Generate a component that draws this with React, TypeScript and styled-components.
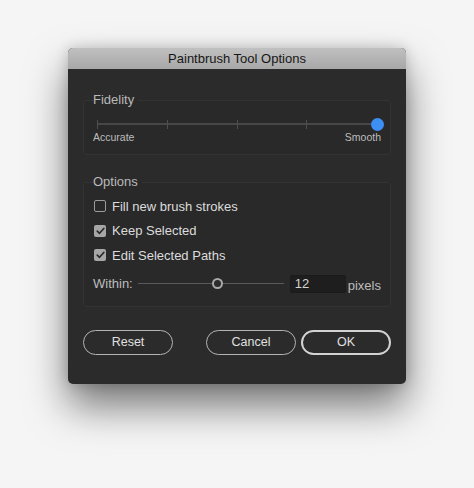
import React from "react";
import styled, { createGlobalStyle } from "styled-components";

const GlobalStyle = createGlobalStyle`
  html, body {
    margin: 0;
    padding: 0;
    background: #f5f5f5;
    font-family: "Liberation Sans", Arial, sans-serif;
  }
`;

const Page = styled.div`
  width: 474px;
  height: 488px;
  padding: 48px 0 0 68px;
  box-sizing: border-box;
`;

const Dialog = styled.div`
  width: 338px;
  background: #2b2b2b;
  border-radius: 5px;
  overflow: hidden;
  box-shadow: 0 22px 40px rgba(0, 0, 0, 0.52), 0 0 14px rgba(0, 0, 0, 0.18);
`;

const TitleBar = styled.div`
  height: 21px;
  line-height: 21px;
  text-align: center;
  font-size: 13px;
  color: #161616;
  background: linear-gradient(#c0c0c0, #a8a8a8);
`;

const Body = styled.div`
  padding: 23px 15px 29px 15px;
  display: flex;
  flex-direction: column;
`;

const Group = styled.fieldset<{ $gap?: number }>`
  margin: ${(p) => p.$gap ?? 0}px 0 0 0;
  padding: 0 9px 0 9px;
  border: 1px solid #333333;
  border-radius: 3px;
  background: #292929;
  min-inline-size: 0;
`;

const Legend = styled.legend`
  padding: 0 4px 0 0;
  font-size: 13px;
  line-height: 16px;
  color: #b9b9b9;
`;

const FidelityBody = styled.div`
  padding: 9px 0 11px 0;
`;

const SliderRow = styled.div`
  height: 14px;
  margin: 0 4px;
  position: relative;
  display: flex;
  align-items: center;
`;

const Track = styled.div`
  position: relative;
  flex: 1;
  height: 2px;
  background: #474747;
  display: flex;
  justify-content: space-between;
  align-items: center;
`;

const Tick = styled.div`
  width: 1px;
  height: 9px;
  background: #4f4f4f;
`;

const BlueKnob = styled.div`
  position: absolute;
  right: -7px;
  top: 50%;
  width: 13px;
  height: 13px;
  margin-top: -6.5px;
  border-radius: 50%;
  background: #3d8ff2;
`;

const ScaleLabels = styled.div`
  display: flex;
  justify-content: space-between;
  font-size: 10.5px;
  line-height: 12px;
  color: #bdbdbd;
`;

const OptionsBody = styled.div`
  padding: 4px 0 12px 0;
  display: flex;
  flex-direction: column;
`;

const CheckRow = styled.label`
  display: flex;
  align-items: center;
  gap: 6px;
  height: 24.5px;
  font-size: 13px;
  color: #dcdcdc;
  padding-left: 1px;
`;

const Box = styled.span<{ $checked: boolean }>`
  width: 12px;
  height: 12px;
  box-sizing: border-box;
  border-radius: 2px;
  border: ${(p) => (p.$checked ? "none" : "1px solid #9c9c9c")};
  background: ${(p) => (p.$checked ? "#a6a6a6" : "transparent")};
  display: flex;
  align-items: center;
  justify-content: center;
`;

const WithinRow = styled.div`
  display: flex;
  align-items: center;
  height: 20px;
  margin-top: 6px;
  font-size: 13px;
  color: #bdbdbd;
`;

const WithinLabel = styled.span`
  margin-right: 5px;
`;

const ThinTrack = styled.div`
  position: relative;
  flex: 1;
  height: 1px;
  background: #5a5a5a;
`;

const RingKnob = styled.div`
  position: absolute;
  top: 50%;
  width: 11px;
  height: 11px;
  margin: -5.5px 0 0 -5.5px;
  box-sizing: border-box;
  border-radius: 50%;
  border: 2px solid #a9a9a9;
  background: #2b2b2b;
`;

const NumberBox = styled.div`
  margin-left: 6px;
  width: 56px;
  height: 18px;
  box-sizing: border-box;
  background: #1e1e1e;
  border: 1px solid #1b1b1b;
  border-radius: 2px;
  padding-left: 4px;
  line-height: 16px;
  font-size: 13px;
  color: #d4d4d4;
`;

const Unit = styled.span`
  margin-left: 2px;
  padding-top: 4px;
`;

const ButtonBar = styled.div`
  margin-top: 23px;
  display: flex;
  justify-content: space-between;
`;

const ButtonGroup = styled.div`
  display: flex;
  gap: 5px;
`;

const Button = styled.button<{ $primary?: boolean }>`
  width: 90px;
  height: 25px;
  box-sizing: border-box;
  border-radius: 13px;
  background: #2b2b2b;
  border: ${(p) => (p.$primary ? "2px solid #d2d2d2" : "1.5px solid #b4b4b4")};
  color: #e0e0e0;
  font-family: "Liberation Sans", Arial, sans-serif;
  font-size: 12.5px;
  padding: 0;
`;

const Check = () => (
  <svg width="9" height="8" viewBox="0 0 9 8">
    <path d="M1.3 4.2 L3.5 6.3 L7.8 1.5" fill="none" stroke="#2a2a2a" strokeWidth="1.7" strokeLinecap="round" strokeLinejoin="round" />
  </svg>
);

const options = [
  { label: "Fill new brush strokes", checked: false },
  { label: "Keep Selected", checked: true },
  { label: "Edit Selected Paths", checked: true },
];

export default function App() {
  return (
    <>
      <GlobalStyle />
      <Page>
        <Dialog>
          <TitleBar>Paintbrush Tool Options</TitleBar>
          <Body>
            <Group>
              <Legend>Fidelity</Legend>
              <FidelityBody>
                <SliderRow>
                  <Track>
                    <Tick />
                    <Tick />
                    <Tick />
                    <Tick />
                    <Tick />
                  </Track>
                  <BlueKnob />
                </SliderRow>
                <ScaleLabels>
                  <span>Accurate</span>
                  <span>Smooth</span>
                </ScaleLabels>
              </FidelityBody>
            </Group>
            <Group $gap={19}>
              <Legend>Options</Legend>
              <OptionsBody>
                {options.map((o) => (
                  <CheckRow key={o.label}>
                    <Box $checked={o.checked}>{o.checked && <Check />}</Box>
                    {o.label}
                  </CheckRow>
                ))}
                <WithinRow>
                  <WithinLabel>Within:</WithinLabel>
                  <ThinTrack>
                    <RingKnob style={{ left: "54.5%" }} />
                  </ThinTrack>
                  <NumberBox>12</NumberBox>
                  <Unit>pixels</Unit>
                </WithinRow>
              </OptionsBody>
            </Group>
            <ButtonBar>
              <Button>Reset</Button>
              <ButtonGroup>
                <Button>Cancel</Button>
                <Button $primary>OK</Button>
              </ButtonGroup>
            </ButtonBar>
          </Body>
        </Dialog>
      </Page>
    </>
  );
}
